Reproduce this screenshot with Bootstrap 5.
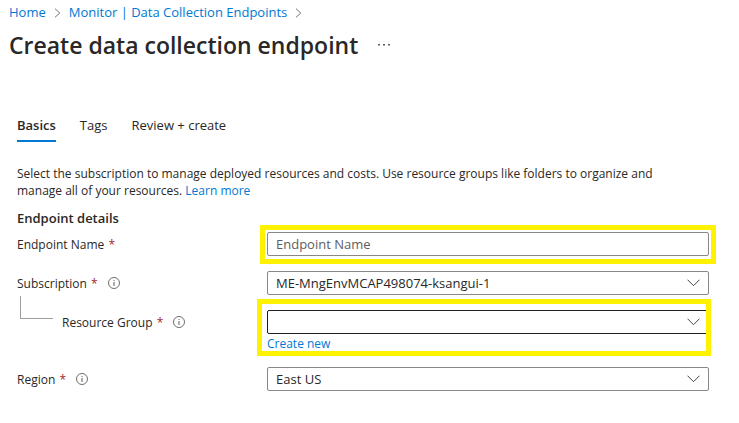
<!DOCTYPE html>
<html lang="en">
<head>
<meta charset="utf-8">
<meta name="viewport" content="width=device-width, initial-scale=1">
<title>Create data collection endpoint</title>
<link href="https://cdn.jsdelivr.net/npm/bootstrap@5.3.0/dist/css/bootstrap.min.css" rel="stylesheet">
<style>
  body { font-family: "Open Sans", "Noto Sans", sans-serif; font-size: 13px; line-height: 17px; color: #292827; background: #fff; }
  a { color: #0078d4; text-decoration: none; }
  a:hover { text-decoration: underline; }
  .page-head { padding: 4px 9px 0; }
  .crumb-sep { width: 7px; height: 10px; stroke: #797775; }
  .page-title { font-size: 23px; line-height: 32px; font-weight: 600; }
  .title-line { gap: 14px; }
  .more-btn { color: #605e5c; width: 24px; height: 24px; }
  .page-body { padding: 55px 30px 32px 17px; }
  .tab-strip { gap: 24px; }
  .tab-strip .nav-link { padding: 1px 0 6px; color: #292827; border: 0; border-bottom: 2px solid transparent; border-radius: 0; background: none; }
  .tab-strip .nav-link.active { font-weight: 600; border-bottom-color: #0078d4; }
  .intro { font-size: 12px; margin: 23px 48px 11px 0; }
  .section-title { font-size: 13px; line-height: 17px; font-weight: 600; margin: 0 0 5px; }
  .form-line { display: grid; grid-template-columns: 250px minmax(0, 1fr); margin-bottom: 15px; }
  .field-label { height: 24px; font-size: 12px; }
  .req { color: #a4262c; margin-left: 1px; }
  .info { width: 12px; height: 12px; margin-left: 10px; }
  .field { height: 24px; min-height: 24px; padding: 0 8px; font-size: 13px; line-height: 17px; color: #292827; border: 1px solid #8a8886; border-radius: 2px; }
  .field::placeholder { color: #605e5c; opacity: 1; }
  select.field { padding-right: 30px; background-image: none; }
  .field-dark { border-color: #201f1e; }
  .chevron { position: absolute; right: 9px; top: 8px; width: 13px; height: 8px; pointer-events: none; }
  .below-link { font-size: 12px; line-height: 16px; margin-top: 2px; }
  .branch { position: absolute; left: 3px; top: -14px; width: 33px; height: 23px; border: solid #a19f9d; border-width: 0 0 1px 1px; }
  .nested { padding-left: 45px; }
  .marker { position: absolute; border: 5px solid #fff200; pointer-events: none; z-index: 2; }
  .marker-name { inset: -7px -7px -8px -7px; }
  .marker-group { inset: -11px -2px -4px -10px; }
</style>
</head>
<body>
<header class="page-head">
  <nav class="d-flex align-items-center" aria-label="Breadcrumb">
    <a href="#">Home</a>
    <svg class="crumb-sep mx-2" viewBox="0 0 7 10" fill="none"><path d="M1 .7 5.8 5 1 9.3"/></svg>
    <a href="#">Monitor | Data Collection Endpoints</a>
    <svg class="crumb-sep mx-2" viewBox="0 0 7 10" fill="none"><path d="M1 .7 5.8 5 1 9.3"/></svg>
  </nav>
  <div class="title-line d-flex align-items-center mt-2">
    <h1 class="page-title mb-0">Create data collection endpoint</h1>
    <button class="btn more-btn p-0 border-0 d-flex align-items-center justify-content-center" type="button" aria-label="More actions">
      <svg width="12" height="2" viewBox="0 0 12 2" fill="currentColor"><path d="M0 0h2v1.5H0zM5 0h2v1.5H5zM10 0h2v1.5h-2z"/></svg>
    </button>
  </div>
</header>
<main class="page-body">
  <div class="nav tab-strip" role="tablist">
    <button class="nav-link active" type="button" role="tab" aria-selected="true">Basics</button>
    <button class="nav-link" type="button" role="tab" aria-selected="false">Tags</button>
    <button class="nav-link" type="button" role="tab" aria-selected="false">Review + create</button>
  </div>
  <p class="intro">Select the subscription to manage deployed resources and costs. Use resource groups like folders to organize and manage all of your resources. <a href="#">Learn more</a></p>
  <form>
    <h2 class="section-title">Endpoint details</h2>
    <div class="form-line">
      <div class="field-label d-flex align-items-center">
        <label for="endpointName">Endpoint Name <span class="req">*</span></label>
      </div>
      <div class="position-relative">
        <input class="form-control field" id="endpointName" type="text" placeholder="Endpoint Name">
        <div class="marker marker-name"></div>
      </div>
    </div>
    <div class="form-line">
      <div class="field-label d-flex align-items-center">
        <label for="subscription">Subscription <span class="req">*</span></label>
        <svg class="info" viewBox="0 0 12 12" fill="none" stroke="#605e5c"><circle cx="6" cy="6" r="5.5" stroke-width=".9"/><path d="M6 5v4M6 3v1"/></svg>
      </div>
      <div class="position-relative">
        <select class="form-select field" id="subscription"><option>ME-MngEnvMCAP498074-ksangui-1</option></select>
        <svg class="chevron" viewBox="0 0 13 8" fill="none" stroke="#484644"><path d="M.5.7 6.5 6.7 12.5.7"/></svg>
      </div>
    </div>
    <div class="form-line">
      <div class="field-label nested position-relative d-flex align-items-center">
        <span class="branch"></span>
        <label for="resourceGroup">Resource Group <span class="req">*</span></label>
        <svg class="info" viewBox="0 0 12 12" fill="none" stroke="#605e5c"><circle cx="6" cy="6" r="5.5" stroke-width=".9"/><path d="M6 5v4M6 3v1"/></svg>
      </div>
      <div class="position-relative">
        <select class="form-select field field-dark" id="resourceGroup"><option></option></select>
        <svg class="chevron" viewBox="0 0 13 8" fill="none" stroke="#484644"><path d="M.5.7 6.5 6.7 12.5.7"/></svg>
        <a class="below-link d-block" href="#">Create new</a>
        <div class="marker marker-group"></div>
      </div>
    </div>
    <div class="form-line mb-0">
      <div class="field-label d-flex align-items-center">
        <label for="region">Region <span class="req">*</span></label>
        <svg class="info" viewBox="0 0 12 12" fill="none" stroke="#605e5c"><circle cx="6" cy="6" r="5.5" stroke-width=".9"/><path d="M6 5v4M6 3v1"/></svg>
      </div>
      <div class="position-relative">
        <select class="form-select field" id="region"><option>East US</option></select>
        <svg class="chevron" viewBox="0 0 13 8" fill="none" stroke="#484644"><path d="M.5.7 6.5 6.7 12.5.7"/></svg>
      </div>
    </div>
  </form>
</main>
<script src="https://cdn.jsdelivr.net/npm/bootstrap@5.3.0/dist/js/bootstrap.bundle.min.js"></script>
</body>
</html>
